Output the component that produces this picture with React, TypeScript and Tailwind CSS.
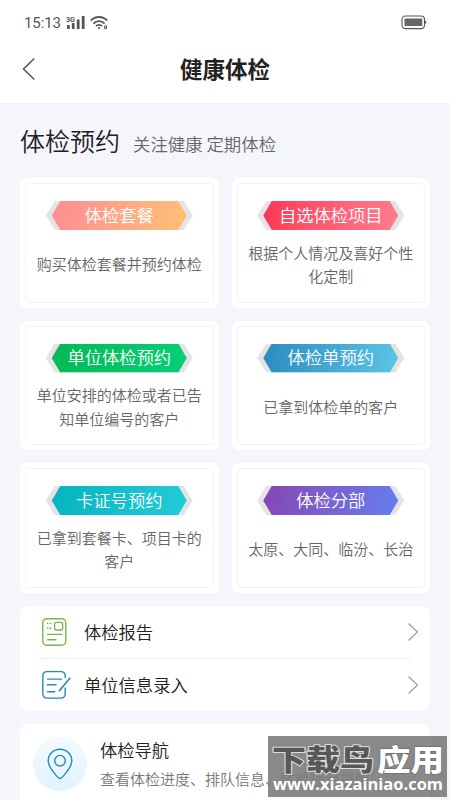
import type { ReactNode } from 'react';

type Booking = {
    title: string;
    lines: string[];
    gradient: string;
};

const bookings: Booking[] = [
    { title: '体检套餐', lines: ['购买体检套餐并预约体检'], gradient: 'from-[#ff8c93] to-[#ffc074]' },
    { title: '自选体检项目', lines: ['根据个人情况及喜好个性', '化定制'], gradient: 'from-[#ff3355] to-[#ff7c90]' },
    { title: '单位体检预约', lines: ['单位安排的体检或者已告', '知单位编号的客户'], gradient: 'from-[#05b954] to-[#04cf78]' },
    { title: '体检单预约', lines: ['已拿到体检单的客户'], gradient: 'from-[#2b8bc0] to-[#5bc6e4]' },
    { title: '卡证号预约', lines: ['已拿到套餐卡、项目卡的', '客户'], gradient: 'from-[#04b4c0] to-[#20ccd8]' },
    { title: '体检分部', lines: ['太原、大同、临汾、长治'], gradient: 'from-[#8446b4] to-[#627df0]' },
];

function StatusBar() {
    return (
        <div className="flex h-[45px] items-center justify-between pl-6 pr-[23px] text-[#555]">
            <div className="flex items-center">
                <span className="mt-px w-[38px] font-[Roboto] text-[15px] font-normal leading-none tracking-[-0.1px]">15:13</span>
                <svg className="ml-1 mt-[-1px]" width="20" height="15" viewBox="0 0 20 15" fill="currentColor">
                    <text x="0" y="6.6" fontSize="8" fontWeight="700" fontFamily="Roboto, sans-serif" textLength="9" lengthAdjust="spacingAndGlyphs">3G</text>
                    <rect x="1" y="10" width="2.8" height="4" rx="0.6" />
                    <rect x="5.8" y="8" width="2.8" height="6" rx="0.6" />
                    <rect x="10.8" y="4.5" width="2.8" height="9.5" rx="0.6" />
                    <rect x="15.8" y="1" width="2.8" height="13" rx="0.6" />
                </svg>
                <svg className="ml-[4px] mt-[-1px]" width="19" height="15" viewBox="0 0 19 15" fill="none" stroke="currentColor" strokeWidth="1.8">
                    <path d="M.8 5.6C5.3.8 12.7.8 17.2 5.6" />
                    <path d="M3.4 8.6c3-3.3 8.2-3.3 11.2 0" />
                    <path d="M6 11.2c1.7-1.7 4.3-1.7 6 0" />
                    <circle cx="9" cy="13" r="1.1" fill="currentColor" stroke="none" />
                    <rect x="14.6" y="10.8" width="2" height="2.8" rx="1" strokeWidth="1.1" />
                </svg>
            </div>
            <svg className="mt-[-1px]" width="26" height="15" viewBox="0 0 26 15" fill="none">
                <rect x="1" y="1" width="22.5" height="12.6" rx="3.5" stroke="#555" strokeWidth="1.1" />
                <rect x="3.5" y="3.6" width="17.8" height="7.4" rx="0.5" fill="#666" />
                <path d="M24.6 6v2.6" stroke="#555" strokeWidth="1.2" />
            </svg>
        </div>
    );
}

function Header() {
    return (
        <header className="grid h-[59px] grid-cols-[1fr_auto_1fr] items-center border-b border-[#eff0f4] pl-5 pr-5">
            <svg className="mt-[-10px]" width="18" height="24" viewBox="0 0 18 24" fill="none" stroke="#555" strokeWidth="1.5">
                <path d="M14.3 1.5 3.5 12l10.8 10.5" />
            </svg>
            <h1 className="mt-[-12px] text-[22.5px] font-bold leading-8 text-[#222]">健康体检</h1>
        </header>
    );
}

function BookingCard({ title, lines, gradient }: Booking) {
    return (
        <div className="h-[129.5px] rounded-[7px] bg-white p-[5px]">
            <div className="flex h-full flex-col items-center rounded-[3px] border border-[#f4f4f5] pt-[17px]">
                <div className="flex h-[29px] w-[147px] shrink-0 justify-center bg-[#e4e4e4] [clip-path:polygon(0_50%,9px_0,calc(100%-9px)_0,100%_50%,calc(100%-9px)_100%,9px_100%)]">
                    <div className={`flex h-[29px] w-[135px] items-center justify-center bg-linear-100 pb-[2px] text-[17.3px] leading-none text-white [clip-path:polygon(0_50%,8.5px_0,calc(100%-8.5px)_0,100%_50%,calc(100%-8.5px)_100%,8.5px_100%)] ${gradient}`}>
                        {title}
                    </div>
                </div>
                <p className="flex h-[68px] shrink-0 flex-col justify-center whitespace-nowrap text-center text-[15px] leading-[23.4px] text-[#666]">
                    {lines.map((line) => (
                        <span key={line}>{line}</span>
                    ))}
                </p>
            </div>
        </div>
    );
}

function ReportIcon() {
    return (
        <svg width="30" height="30" viewBox="0 0 30 30" fill="none" stroke="#7ab648" strokeWidth="1.4">
            <rect x="2.8" y="1.7" width="23" height="26.6" rx="4" />
            <rect x="14.6" y="5.4" width="8" height="7.6" rx="1.8" />
            <path d="M7 6.4h1.3M9.4 6.4h2M7 11.3h1.3M9.4 11.3h2M7 17.4h15.7M7 22.8h9.3" />
        </svg>
    );
}

function EntryIcon() {
    return (
        <svg className="overflow-visible" width="30" height="30" viewBox="0 0 30 30" fill="none" stroke="#2589bd" strokeWidth="1.4">
            <path d="M25.2 8V5.6a4 4 0 0 0-4-4H6.8a4 4 0 0 0-4 4v18.5a4 4 0 0 0 4 4h14.4a4 4 0 0 0 4-4v-6.6" />
            <path d="M7 9.1h15M7 14.8h9.6M7 21.7h8.2" />
            <path d="m19 21.3 11.2-13.6" strokeWidth="1.7" />
        </svg>
    );
}

function MenuRow({ icon, label }: { icon: ReactNode; label: string }) {
    return (
        <div className="flex h-[53px] items-center">
            {icon}
            <span className="ml-[14px] flex-1 text-[17.3px] leading-none text-[#222]">{label}</span>
            <svg className="mr-[11px]" width="12" height="20" viewBox="0 0 12 20" fill="none" stroke="#999" strokeWidth="1.1">
                <path d="m1.5 1.5 9 8.5-9 8.5" />
            </svg>
        </div>
    );
}

function Watermark() {
    return (
        <div className="absolute left-[268px] top-[736px] h-[61px] w-[179px] bg-[#7c7c7c]/90">
            <svg className="block" width="179" height="61" viewBox="0 0 179 61" strokeLinejoin="round">
                <g fontFamily="'Noto Sans CJK SC', sans-serif" fontWeight="900" fontSize="29" paintOrder="stroke">
                    <text x="4" y="35" textLength="102" lengthAdjust="spacingAndGlyphs" fill="#585858" stroke="#ddd" strokeWidth="2">下载鸟</text>
                    <text x="109" y="35" textLength="67" lengthAdjust="spacingAndGlyphs" fill="#fff" stroke="#666" strokeWidth="1">应用</text>
                </g>
                <text x="5" y="54" textLength="170" lengthAdjust="spacingAndGlyphs" fontFamily="'Open Sans', sans-serif" fontWeight="700" fontSize="16" fill="#fff">www.xiazainiao.com</text>
            </svg>
        </div>
    );
}

export default function App() {
    return (
        <div className="relative h-[800px] w-[450px] overflow-hidden bg-[#f4f6fb] font-['Noto_Sans_CJK_SC',sans-serif] font-[350]">
            <div className="bg-white">
                <StatusBar />
                <Header />
            </div>

            <main className="px-5">
                <div className="flex h-[74px] items-baseline pt-[18px]">
                    <h2 className="text-[25px] leading-[37px] font-[350] text-[#222]">体检预约</h2>
                    <span className="ml-[13px] text-[17.4px] text-[#666]">关注健康 定期体检</span>
                </div>

                <section className="grid grid-cols-2 gap-[13px]">
                    {bookings.map((item) => (
                        <BookingCard key={item.title} {...item} />
                    ))}
                </section>

                <section className="mt-[13px] h-[105.5px] rounded-lg bg-white pl-5">
                    <MenuRow icon={<ReportIcon />} label="体检报告" />
                    <div className="mr-5 -mt-px h-px bg-[#eeeff2]" />
                    <MenuRow icon={<EntryIcon />} label="单位信息录入" />
                </section>

                <section className="mt-[13px] flex h-[106px] rounded-lg bg-white pl-[13px] pt-[13px]">
                    <div className="flex size-[54px] shrink-0 items-center justify-center rounded-full bg-linear-to-b from-[#f3faff] to-[#e0f3fe]">
                        <svg width="26" height="32" viewBox="0 0 26 32" fill="none" stroke="#2589bd" strokeWidth="1.4">
                            <path d="M13 30.5C11.8 30.5 1.2 20 1.2 12.6a11.8 11.4 0 0 1 23.6 0C24.8 20 14.2 30.5 13 30.5Z" />
                            <circle cx="13" cy="12.7" r="5.3" />
                        </svg>
                    </div>
                    <div className="ml-[13px] -mt-px whitespace-nowrap">
                        <h3 className="text-[17.3px] leading-[27px] font-[350] text-[#222]">体检导航</h3>
                        <p className="mt-[4px] text-[15px] leading-[23px] text-[#777]">查看体检进度、排队信息、体检项目提醒</p>
                    </div>
                </section>
            </main>

            <Watermark />
        </div>
    );
}
